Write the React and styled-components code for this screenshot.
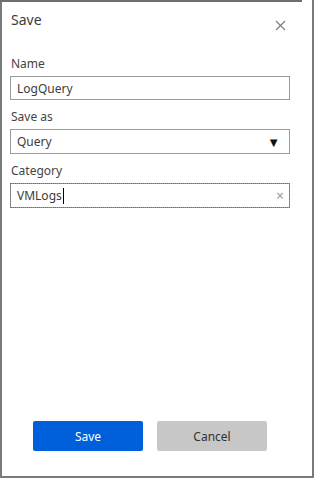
import React from "react";
import styled, { createGlobalStyle } from "styled-components";

const GlobalStyle = createGlobalStyle`
  html, body {
    margin: 0;
    padding: 0;
    background: #fff;
  }
  body {
    font-family: "Segoe UI", "Noto Sans", "Open Sans", sans-serif;
    color: #3c3c3c;
  }
`;

const Panel = styled.section`
  position: relative;
  box-sizing: border-box;
  width: 314px;
  height: 478px;
  padding: 10px 22px 0 8px;
  border-left: 2px solid #7a7a7a;
  border-right: 2px solid #7a7a7a;
  border-bottom: 2px solid #7a7a7a;
  display: flex;
  flex-direction: column;

  &::before {
    content: "";
    position: absolute;
    top: 0;
    left: -2px;
    width: 302px;
    height: 2px;
    background: #6e6e6e;
  }
`;

const Header = styled.div`
  display: flex;
  justify-content: space-between;
  align-items: flex-start;
  height: 45px;
`;

const Title = styled.h2`
  margin: 0 0 0 1px;
  font-size: 14px;
  font-weight: 400;
  line-height: 20px;
  color: #3c3c3c;
`;

const CloseButton = styled.button`
  margin: 10px 4px 0 0;
  padding: 0;
  width: 11px;
  height: 11px;
  border: 0;
  background: none;
  display: flex;
  cursor: pointer;
`;

const Field = styled.div`
  display: flex;
  flex-direction: column;
  margin-bottom: 8px;
`;

const Label = styled.label`
  margin: 0 0 3px 1px;
  font-size: 12px;
  line-height: 18px;
  color: #444;
`;

const Box = styled.div`
  box-sizing: border-box;
  display: flex;
  align-items: center;
  height: ${(p) => p.$h || 24}px;
  padding: 0 6px;
  border: 1px solid #9a9a9a;
  font-size: 12px;
  color: #3c3c3c;
  outline: ${(p) => (p.$focused ? "1px dotted #3a78d8" : "none")};
  outline-offset: -1px;
`;

const Value = styled.span`
  flex: 1;
`;

const Caret = styled.span`
  display: inline-block;
  width: 1px;
  height: 16px;
  margin-left: 1px;
  vertical-align: -4px;
  background: #000;
`;

const Arrow = styled.span`
  font-size: 13px;
  color: #111;
  margin-right: 3px;
`;

const Clear = styled.span`
  font-size: 14px;
  color: #9a9a9a;
  margin-right: -1px;
`;

const Footer = styled.div`
  margin-top: auto;
  padding-bottom: 25px;
  display: flex;
  justify-content: center;
  gap: 14px;
`;

const Button = styled.button`
  width: 110px;
  height: 30px;
  border: 0;
  border-radius: 2px;
  font-family: inherit;
  font-size: 12px;
  background: ${(p) => (p.$primary ? "#005fdb" : "#c7c7c7")};
  color: ${(p) => (p.$primary ? "#fff" : "#333")};
  cursor: pointer;
`;

export default function App() {
  return (
    <>
      <GlobalStyle />
      <Panel>
        <Header>
          <Title>Save</Title>
          <CloseButton aria-label="Close">
            <svg width="11" height="11" viewBox="0 0 11 11">
              <path d="M1 1 L10 10 M10 1 L1 10" stroke="#7a7a7a" strokeWidth="1.1" fill="none" />
            </svg>
          </CloseButton>
        </Header>

        <Field>
          <Label>Name</Label>
          <Box>
            <Value>LogQuery</Value>
          </Box>
        </Field>

        <Field>
          <Label>Save as</Label>
          <Box $h={25}>
            <Value>Query</Value>
            <Arrow>▼</Arrow>
          </Box>
        </Field>

        <Field>
          <Label>Category</Label>
          <Box $h={25} $focused>
            <Value>
              VMLogs<Caret />
            </Value>
            <Clear>×</Clear>
          </Box>
        </Field>

        <Footer>
          <Button $primary>Save</Button>
          <Button>Cancel</Button>
        </Footer>
      </Panel>
    </>
  );
}
